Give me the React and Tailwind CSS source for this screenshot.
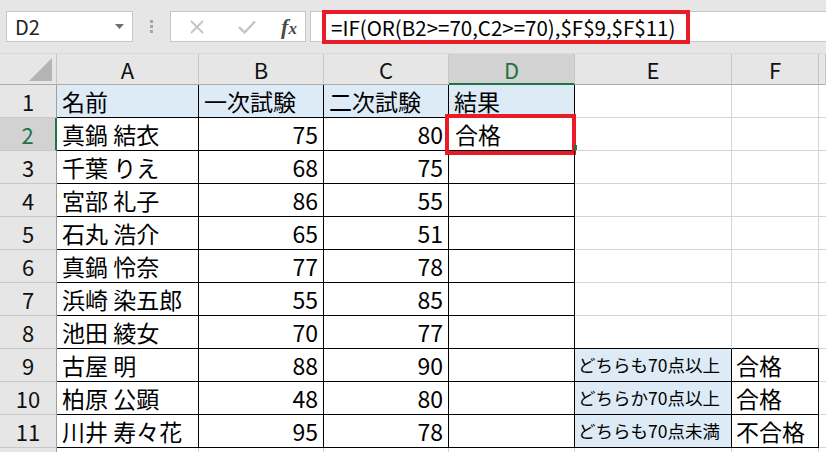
import React from "react";

const rows = [
  ["真鍋 結衣", 75, 80, "合格", "", ""],
  ["千葉 りえ", 68, 75, "", "", ""],
  ["宮部 礼子", 86, 55, "", "", ""],
  ["石丸 浩介", 65, 51, "", "", ""],
  ["真鍋 怜奈", 77, 78, "", "", ""],
  ["浜崎 染五郎", 55, 85, "", "", ""],
  ["池田 綾女", 70, 77, "", "", ""],
  ["古屋 明", 88, 90, "", "どちらも70点以上", "合格"],
  ["柏原 公顕", 48, 80, "", "どちらか70点以上", "合格"],
  ["川井 寿々花", 95, 78, "", "どちらも70点未満", "不合格"],
];

const cols = ["A", "B", "C", "D", "E", "F", ""];

function Toolbar() {
  return (
    <div className="h-[54px] bg-[#e6e6e6] flex items-start pt-[11px] border-b border-b-[#dadada]">
      <div className="ml-[6px] w-[127px] h-[31px] bg-white border border-[#c6c6c6] flex items-center justify-between pl-[8px] pr-[8px]">
        <span className="text-[20px] leading-none text-[#222]">D2</span>
        <svg width="9" height="5" viewBox="0 0 9 5">
          <path d="M0 0 L9 0 L4.5 5 Z" fill="#6f6f6f" />
        </svg>
      </div>
      <div className="w-[37px] h-[31px] flex flex-col items-center justify-center gap-[2px]">
        <div className="w-[3px] h-[3px] bg-[#a6a6a6]" />
        <div className="w-[3px] h-[3px] bg-[#a6a6a6]" />
        <div className="w-[3px] h-[3px] bg-[#a6a6a6]" />
      </div>
      <div className="w-[136px] h-[31px] bg-white border border-[#c6c6c6] flex items-center">
        <div className="w-[46px] flex justify-center pl-[6px]">
          <svg width="16" height="16" viewBox="0 0 16 16">
            <path d="M2 2 L14 14 M14 2 L2 14" stroke="#c4c4c4" strokeWidth="1.8" />
          </svg>
        </div>
        <div className="w-[46px] flex justify-center pl-[14px]">
          <svg width="18" height="14" viewBox="0 0 18 14">
            <path d="M1 7 L6.5 12.5 L17 1.5" stroke="#c4c4c4" strokeWidth="2.4" fill="none" />
          </svg>
        </div>
        <div className="flex-1 flex justify-center pl-[10px]">
          <span className="font-['Liberation_Serif',serif] italic font-bold text-[22px] leading-none text-[#4a4a4a]">
            f<span className="text-[17px]">x</span>
          </span>
        </div>
      </div>
      <div className="ml-[4px] flex-1 h-[31px] bg-white border border-[#c6c6c6] border-r-0 relative">
        <div className="absolute left-[11px] top-[-2px] w-[368px] h-[34px] border-[4px] border-[#e81c27] flex items-center pl-[5px]">
          <span className="text-[20.5px] leading-none text-black whitespace-nowrap">
            =IF(OR(B2&gt;=70,C2&gt;=70),$F$9,$F$11)
          </span>
        </div>
      </div>
    </div>
  );
}

function HeaderRow() {
  return (
    <div className="grid grid-cols-[57px_142px_125px_125px_126px_157px_87px_1fr] h-[31px] bg-[#e6e6e6]">
      <div className="relative border-r border-r-[#c6c6c6] border-b border-b-[#ababab]">
        <svg className="absolute right-[4px] bottom-[3px]" width="23" height="23" viewBox="0 0 23 23">
          <path d="M23 0 L23 23 L0 23 Z" fill="#b4b4b4" />
        </svg>
      </div>
      {cols.map((c, i) =>
        c === "D" ? (
          <div
            key={i}
            className="bg-[#d2d2d2] border-r border-r-[#c6c6c6] border-b-2 border-b-[#217346] flex items-center justify-center text-[22px] leading-none text-[#217346]"
          >
            {c}
          </div>
        ) : (
          <div
            key={i}
            className="border-r border-r-[#c6c6c6] border-b border-b-[#ababab] flex items-center justify-center text-[22px] leading-none text-[#111]"
          >
            {c}
          </div>
        )
      )}
    </div>
  );
}

function RowHead({ n }) {
  if (n === 2) {
    return (
      <div className="bg-[#d2d2d2] border-r-2 border-r-[#217346] border-b border-b-[#c8c8c8] flex items-center justify-center text-[22px] leading-none text-[#217346]">
        {n}
      </div>
    );
  }
  return (
    <div className="bg-[#e6e6e6] border-r border-r-[#9e9e9e] border-b border-b-[#c8c8c8] flex items-center justify-center text-[22px] leading-none text-[#111]">
      {n}
    </div>
  );
}

const black = "border-r border-r-black border-b border-b-black";
const gray = "border-r border-r-[#d4d4d4] border-b border-b-[#d4d4d4]";

function TitleRow() {
  const blue = `bg-[#ddebf7] ${black} flex items-center pl-[5px] text-[23px] leading-none`;
  return (
    <div className="grid grid-cols-[57px_142px_125px_125px_126px_157px_87px_1fr] h-[33px]">
      <RowHead n={1} />
      <div className={blue}>名前</div>
      <div className={blue}>一次試験</div>
      <div className={blue}>二次試験</div>
      <div className={blue}>結果</div>
      <div className={gray} />
      <div className={gray} />
      <div className="border-b border-b-[#d4d4d4]" />
    </div>
  );
}

function DataRow({ n, r }) {
  const [name, b, c, d, e, f] = r;
  const hasRef = n >= 9;
  const preRef = n === 8;
  return (
    <div className="grid grid-cols-[57px_142px_125px_125px_126px_157px_87px_1fr] h-[33px]">
      <RowHead n={n} />
      <div className={`${black} flex items-center pl-[5px] text-[23px] leading-none whitespace-nowrap`}>{name}</div>
      <div className={`${black} flex items-center justify-end pr-[5px] text-[23px] leading-none`}>{b}</div>
      <div className={`${black} flex items-center justify-end pr-[5px] text-[23px] leading-none`}>{c}</div>
      <div className={`${black} relative flex items-center pl-[6px] text-[23px] leading-none`}>
        {d}
        {n === 2 && (
          <>
            <div className="absolute left-[-4px] top-[-4px] w-[131px] h-[41px] border-[4px] border-[#e81c27]" />
            <div className="absolute right-[-3px] bottom-[0px] w-[3px] h-[5px] bg-[#217346]" />
          </>
        )}
      </div>
      {hasRef ? (
        <div className={`bg-[#ddebf7] ${black} flex items-center pl-[3px] text-[17.5px] leading-none whitespace-nowrap`}>{e}</div>
      ) : (
        <div className={preRef ? "border-r border-r-[#d4d4d4] border-b border-b-black" : gray} />
      )}
      {hasRef ? (
        <div className={`${black} flex items-center pl-[4px] text-[23px] leading-none whitespace-nowrap`}>{f}</div>
      ) : (
        <div className={preRef ? "border-r border-r-[#d4d4d4] border-b border-b-black" : gray} />
      )}
      <div className="border-b border-b-[#d4d4d4]" />
    </div>
  );
}

function TailRow() {
  return (
    <div className="grid grid-cols-[57px_142px_125px_125px_126px_157px_87px_1fr] h-[33px]">
      <div className="bg-[#e6e6e6] border-r border-r-[#9e9e9e]" />
      <div className="border-r border-r-[#d4d4d4]" />
      <div className="border-r border-r-[#d4d4d4]" />
      <div className="border-r border-r-[#d4d4d4]" />
      <div className="border-r border-r-[#d4d4d4]" />
      <div className="border-r border-r-[#d4d4d4]" />
      <div className="border-r border-r-[#d4d4d4]" />
      <div />
    </div>
  );
}

export default function App() {
  return (
    <div className="w-[826px] h-[452px] overflow-hidden bg-white text-black font-['Noto_Sans_CJK_JP',sans-serif]">
      <Toolbar />
      <HeaderRow />
      <TitleRow />
      {rows.map((r, i) => (
        <DataRow key={i} n={i + 2} r={r} />
      ))}
      <TailRow />
    </div>
  );
}
